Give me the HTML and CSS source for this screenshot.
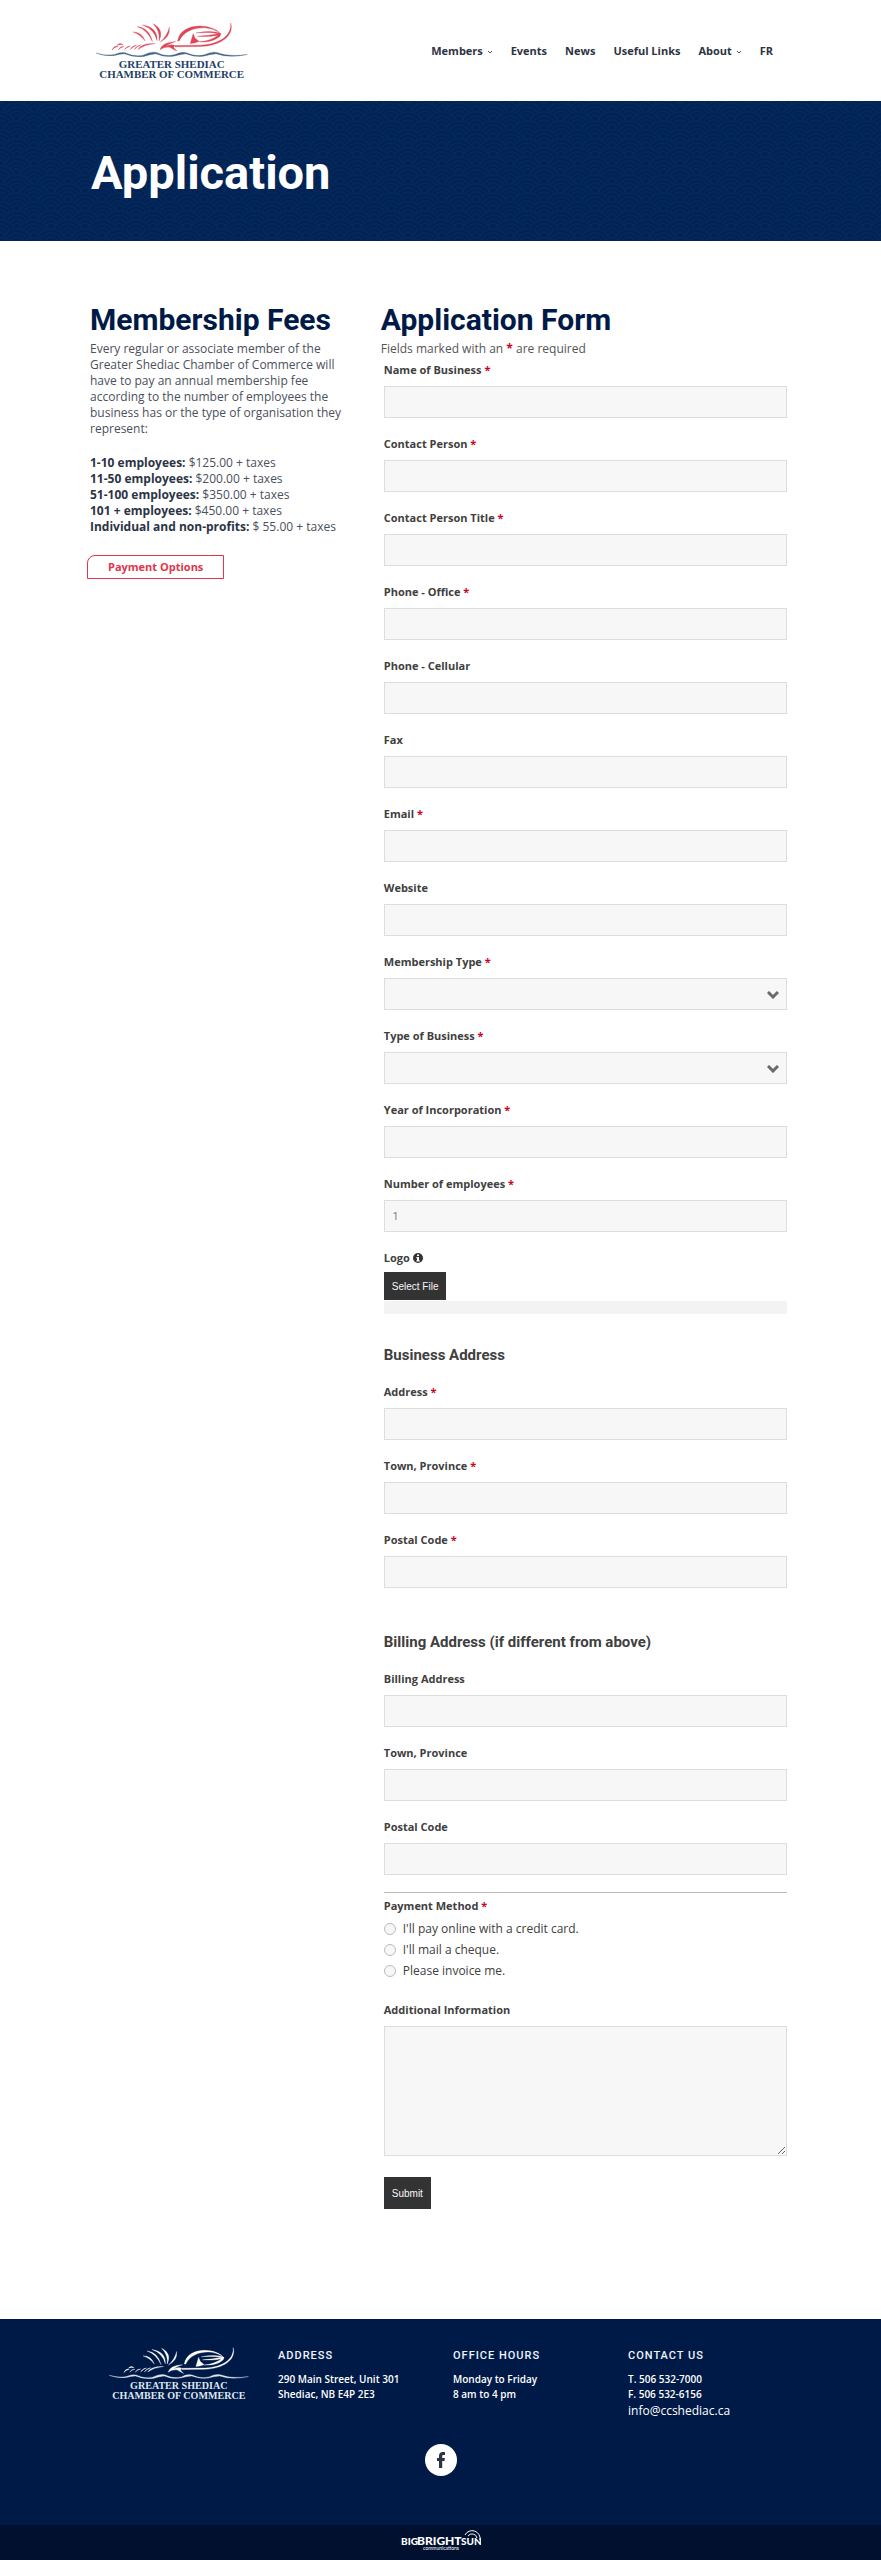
FILE: index.html
```html
<!DOCTYPE html>
<html lang="en">
<head>
    <meta charset="UTF-8">
    <meta name="viewport" content="width=device-width, initial-scale=1.0">
    <title>Application - Greater Shediac Chamber of Commerce</title>
    <link rel="stylesheet" href="styles.css">
</head>
<body>
    <header class="header">
        <a href="#" aria-label="Greater Shediac Chamber of Commerce">
            <svg class="logo" viewBox="70 50 480 190">
                <g id="lobster" class="logo-lobster">
                    <path d="M189 92 Q216 92 226 119 Q210 98 189 92Z"/>
                    <path d="M202 76 Q238 80 248 121 Q232 86 202 76Z"/>
                    <path d="M218 71 Q264 78 262 118 Q254 84 218 71Z"/>
                    <path d="M250 67 Q284 84 268 119 Q272 90 250 67Z"/>
                    <path d="M299 78 Q302 108 272 122 Q293 104 299 78Z"/>
                    <path d="M324 119 C334 60 430 66 453 98 C425 70 350 72 329 119Z"/>
                    <path d="M371 97 L376 110 L389 121 Q374 127 362 127Z"/>
                    <path d="M380 95 Q430 86 454 97 Q456 104 442 112 Q424 124 389 122 Q425 119 446 102 Q420 108 384 105 Q420 103 446 97 Q420 92 380 95Z"/>
                    <path d="M484 65 C496 106 450 134 392 136 L316 137 L316 133 L392 132 C448 130 488 104 484 65Z"/>
                    <path d="M271 146 Q276 124 318 121 Q296 128 287 136 Q302 128 315 132 L312 139 L322 150 L300 138 Q282 136 271 146Z"/>
                    <path d="M204 145 Q215 126 256 127 Q224 130 204 145Z"/>
                    <path d="M126 147 Q132 132 144 136 Q132 138 126 147Z"/>
                    <path d="M141 133 Q148 122 160 131 Q150 128 141 133Z"/>
                    <path d="M145 146 Q151 134 162 136 Q152 138 145 146Z"/>
                    <path d="M163 146 Q170 134 181 135 Q170 138 163 146Z"/>
                    <path d="M181 145 Q187 133 200 132 Q190 136 181 145Z"/>
                    <path d="M193 145 Q199 134 214 131 Q202 136 193 145Z"/>
                </g>
                <path id="wave" class="logo-wave" d="M78 156 Q108 165 134 160 Q152 152 166 155 Q192 168 220 162 Q244 150 260 154 Q288 168 314 161 Q335 150 350 155 Q380 168 405 161 Q428 150 442 154 Q480 168 534 160 Q480 172 440 158 Q420 160 402 165 Q375 169 348 158 Q330 160 312 165 Q286 170 258 158 Q240 160 222 166 Q190 170 164 158 Q150 158 134 163 Q104 167 78 156Z"/>
                <text class="logo-name" x="306" y="202">GREATER SHEDIAC</text>
                <text class="logo-name" x="306" y="232">CHAMBER OF COMMERCE</text>
            </svg>
        </a>
        <nav class="nav">
            <a href="#">Members <svg class="caret" viewBox="0 0 6 4"><path d="M1 1l2 2 2-2"/></svg></a>
            <a href="#">Events</a>
            <a href="#">News</a>
            <a href="#">Useful Links</a>
            <a href="#">About <svg class="caret" viewBox="0 0 6 4"><path d="M1 1l2 2 2-2"/></svg></a>
            <a href="#">FR</a>
        </nav>
    </header>

    <section class="hero">
        <svg class="hero-pattern" aria-hidden="true">
            <defs>
                <g id="scale">
                    <circle class="scale-fill" r="17"/>
                    <circle r="16"/>
                    <circle r="12"/>
                    <circle r="8"/>
                    <circle r="4"/>
                </g>
                <pattern id="waves" width="34" height="18" patternUnits="userSpaceOnUse">
                    <use href="#scale" x="17" y="0"/>
                    <use href="#scale" x="0" y="9"/>
                    <use href="#scale" x="34" y="9"/>
                    <use href="#scale" x="17" y="18"/>
                    <use href="#scale" x="0" y="27"/>
                    <use href="#scale" x="34" y="27"/>
                </pattern>
            </defs>
            <rect width="100%" height="100%" fill="url(#waves)"/>
        </svg>
        <h1>Application</h1>
    </section>

    <main class="main">
        <section class="fees">
            <h2>Membership Fees</h2>
            <p>Every regular or associate member of the Greater Shediac Chamber of Commerce will have to pay an annual membership fee according to the number of employees the business has or the type of organisation they represent:</p>
            <ul>
                <li><strong>1-10 employees:</strong> $125.00 + taxes</li>
                <li><strong>11-50 employees:</strong> $200.00 + taxes</li>
                <li><strong>51-100 employees:</strong> $350.00 + taxes</li>
                <li><strong>101 + employees:</strong> $450.00 + taxes</li>
                <li><strong>Individual and non-profits:</strong> $ 55.00 + taxes</li>
            </ul>
            <a class="payment-btn" href="#">Payment Options</a>
        </section>

        <section class="application">
            <h2>Application Form</h2>
            <p class="note">Fields marked with an <span class="req">*</span> are required</p>
            <form>
                <div class="field">
                    <label for="business">Name of Business <span class="req">*</span></label>
                    <input type="text" id="business">
                </div>
                <div class="field">
                    <label for="contact">Contact Person <span class="req">*</span></label>
                    <input type="text" id="contact">
                </div>
                <div class="field">
                    <label for="contactTitle">Contact Person Title <span class="req">*</span></label>
                    <input type="text" id="contactTitle">
                </div>
                <div class="field">
                    <label for="office">Phone - Office <span class="req">*</span></label>
                    <input type="tel" id="office">
                </div>
                <div class="field">
                    <label for="cell">Phone - Cellular</label>
                    <input type="tel" id="cell">
                </div>
                <div class="field">
                    <label for="fax">Fax</label>
                    <input type="tel" id="fax">
                </div>
                <div class="field">
                    <label for="email">Email <span class="req">*</span></label>
                    <input type="email" id="email">
                </div>
                <div class="field">
                    <label for="website">Website</label>
                    <input type="text" id="website">
                </div>
                <div class="field">
                    <label for="memberType">Membership Type <span class="req">*</span></label>
                    <div class="select">
                        <select id="memberType"><option></option></select>
                        <svg viewBox="0 0 12 8"><path d="M1 1l5 5 5-5"/></svg>
                    </div>
                </div>
                <div class="field">
                    <label for="businessType">Type of Business <span class="req">*</span></label>
                    <div class="select">
                        <select id="businessType"><option></option></select>
                        <svg viewBox="0 0 12 8"><path d="M1 1l5 5 5-5"/></svg>
                    </div>
                </div>
                <div class="field">
                    <label for="year">Year of Incorporation <span class="req">*</span></label>
                    <input type="text" id="year">
                </div>
                <div class="field">
                    <label for="employees">Number of employees <span class="req">*</span></label>
                    <input type="text" id="employees" value="1">
                </div>
                <div class="upload">
                    <label for="selectFile">Logo
                        <svg class="info" viewBox="0 0 10 10"><circle cx="5" cy="5" r="5"/><path d="M4 1.5h2v1.6H4zM3.4 4H6v3.2h.7v1.2H3.4V7.2H4V5.2h-.6z"/></svg>
                    </label>
                    <button type="button" id="selectFile">Select File</button>
                    <div class="progress"></div>
                </div>

                <h3>Business Address</h3>
                <div class="field">
                    <label for="address">Address <span class="req">*</span></label>
                    <input type="text" id="address">
                </div>
                <div class="field">
                    <label for="town">Town, Province <span class="req">*</span></label>
                    <input type="text" id="town">
                </div>
                <div class="field">
                    <label for="postal">Postal Code <span class="req">*</span></label>
                    <input type="text" id="postal">
                </div>

                <h3>Billing Address (if different from above)</h3>
                <div class="field">
                    <label for="billAddress">Billing Address</label>
                    <input type="text" id="billAddress">
                </div>
                <div class="field">
                    <label for="billTown">Town, Province</label>
                    <input type="text" id="billTown">
                </div>
                <div class="field">
                    <label for="billPostal">Postal Code</label>
                    <input type="text" id="billPostal">
                </div>

                <hr>

                <fieldset class="payment">
                    <legend>Payment Method <span class="req">*</span></legend>
                    <label><input type="radio" name="payment" value="card"> I'll pay online with a credit card.</label>
                    <label><input type="radio" name="payment" value="cheque"> I'll mail a cheque.</label>
                    <label><input type="radio" name="payment" value="invoice"> Please invoice me.</label>
                </fieldset>

                <div class="field">
                    <label for="info">Additional Information</label>
                    <textarea id="info"></textarea>
                </div>
                <button type="submit" class="submit">Submit</button>
            </form>
        </section>
    </main>

    <footer class="footer">
        <div class="footer-row">
            <svg class="logo logo-white" viewBox="70 50 480 190">
                <use href="#lobster"/>
                <use href="#wave"/>
                <text class="logo-name" x="306" y="202">GREATER SHEDIAC</text>
                <text class="logo-name" x="306" y="232">CHAMBER OF COMMERCE</text>
            </svg>
            <div>
                <h4>Address</h4>
                <p>290 Main Street, Unit 301<br>Shediac, NB E4P 2E3</p>
            </div>
            <div>
                <h4>Office Hours</h4>
                <p>Monday to Friday<br>8 am to 4 pm</p>
            </div>
            <div>
                <h4>Contact Us</h4>
                <p>T. 506 532-7000<br>F. 506 532-6156</p>
                <a href="#">info@ccshediac.ca</a>
            </div>
        </div>
        <a class="facebook" href="#" aria-label="Facebook">
            <svg viewBox="0 0 32 32"><path d="M14 24V17h-2v-3h2v-2c0-2.600 1.400-4 3.800-4h2.200v3h-1.500c-1 0-1.300.500-1.300 1.300V14h2.700l-.4 3h-2.300v7z"/></svg>
        </a>
    </footer>
    <div class="bottom-bar">
        <svg class="sun-logo" viewBox="0 0 80 24" role="img" aria-label="Big Bright Sun communications">
            <text class="sun-small" x="0" y="17">BIG</text>
            <text class="sun-big" x="16" y="17">BRIGHT</text>
            <text class="sun-small" x="60" y="17">SUN</text>
            <path d="M64 7a8 8 0 0 1 15 5M67 8a5 5 0 0 1 9 2"/>
            <text class="sun-sub" x="40" y="22">communications</text>
        </svg>
    </div>
</body>
</html>
```
FILE: styles.css
```css
* {
    box-sizing: border-box;
}

body {
    margin: 0;
    background-color: white;
    color: #4a505c;
    font-family: "Open Sans", sans-serif;
    font-size: 12px;
    line-height: 16px;
}

h1, h2, h3, h4 {
    margin: 0;
    font-family: Roboto, sans-serif;
}

a {
    color: inherit;
    text-decoration: none;
}

/* header */
.header {
    display: flex;
    justify-content: space-between;
    align-items: center;
    padding: 18px 108px 20px 93px;
}

.logo {
    display: block;
    width: 160px;
    height: 63px;
    --lobster: #dc4555;
    --wave: #3f6184;
    --name: #1f3f68;
}

.logo-lobster {
    fill: var(--lobster);
    stroke: var(--lobster);
    stroke-width: 1;
}

.logo-wave {
    fill: var(--wave);
    stroke: var(--wave);
    stroke-width: 1;
}

.logo-name {
    fill: var(--name);
    font-family: "Liberation Serif", serif;
    font-size: 33px;
    font-weight: bold;
    text-anchor: middle;
}

.nav {
    display: flex;
    gap: 18px;
    padding-top: 2px;
    color: #2c3444;
    font-size: 11px;
    font-weight: 700;
    white-space: nowrap;
}

.caret {
    width: 6px;
    height: 4px;
    margin-left: 1px;
    vertical-align: middle;
    fill: none;
    stroke: #555;
}

/* hero */
.hero {
    position: relative;
    padding: 44px 91px 40px;
    background-color: #002254;
}

.hero h1 {
    position: relative;
    color: white;
    font-size: 47px;
    line-height: 56px;
}

.hero-pattern {
    position: absolute;
    inset: 0;
    width: 100%;
    height: 100%;
}

.hero-pattern circle {
    fill: none;
    stroke: #042859;
    stroke-width: 2;
}

.hero-pattern .scale-fill {
    fill: #002254;
    stroke: none;
}

/* content */
.main {
    display: grid;
    grid-template-columns: minmax(0, 5fr) minmax(0, 8fr);
    gap: 35px;
    padding: 61px 91px 110px 90px;
}

.main h2 {
    color: #001a47;
    font-size: 30px;
    line-height: 36px;
    white-space: nowrap;
}

.fees p {
    margin: 3px 0 18px;
}

.fees ul {
    margin: 0 0 20px;
    padding: 0;
    list-style: none;
}

.fees strong {
    color: #2c3444;
}

.payment-btn {
    display: inline-block;
    margin-left: -3px;
    padding: 3px 20px;
    border: 1px solid #e0354b;
    border-radius: 8px 0 0 0;
    color: #e0354b;
    font-size: 11px;
    font-weight: 700;
}

.note {
    margin: 3px 0 4px;
    color: #555;
}

.req {
    color: #d0021b;
    font-weight: bold;
}

form {
    padding: 0 3px;
    color: #404040;
}

.field {
    margin-bottom: 17px;
}

.field > label,
.upload label,
.payment legend {
    display: block;
    padding: 0;
    font-size: 11px;
    font-weight: bold;
    line-height: 18px;
}

.field input,
.field select,
.field textarea {
    display: block;
    width: 100%;
    height: 32px;
    margin-top: 7px;
    padding: 0 8px;
    border: 1px solid #ddd;
    border-radius: 0;
    background-color: #f7f7f7;
    color: #777;
    font-family: Roboto, sans-serif;
    font-size: 10px;
    appearance: none;
}

.field textarea {
    height: 130px;
}

.select {
    position: relative;
}

.select svg {
    position: absolute;
    top: 13px;
    right: 8px;
    width: 12px;
    height: 8px;
    fill: none;
    stroke: #6a6a6a;
    stroke-width: 3;
    pointer-events: none;
}

.info {
    width: 10px;
    height: 10px;
    vertical-align: -1px;
}

.info circle {
    fill: #333;
}

.info path {
    fill: white;
}

form button {
    display: block;
    height: 28px;
    padding: 0 8px;
    border: 0;
    background-color: #333;
    color: #f7f7f7;
    font-family: "Liberation Sans", sans-serif;
    font-size: 10px;
    cursor: pointer;
}

.upload button {
    margin-top: 5px;
}

form .submit {
    height: 32px;
    margin-top: 21px;
}

.progress {
    height: 13px;
    margin-top: 1px;
    border-radius: 2px;
    background-color: #f3f3f3;
}

form h3 {
    margin: 30px 0 17px;
    font-size: 15px;
    line-height: 22px;
}

.field + h3 {
    margin-top: 43px;
}

hr {
    height: 1px;
    margin: 16px 0 4px;
    border: 0;
    background-color: #bbb;
}

.payment {
    margin: 0 0 20px;
    padding: 0;
    border: 0;
}

.payment legend {
    margin-bottom: 3px;
}

.payment label {
    display: flex;
    align-items: center;
    gap: 7px;
    line-height: 21px;
}

.payment input {
    width: 12px;
    height: 12px;
    margin: 0;
    border: 1px solid #bbb;
    border-radius: 50%;
    background-color: #f7f7f7;
    appearance: none;
}

/* footer */
.footer {
    padding: 24px 0 49px;
    background-color: #001a47;
    color: white;
}

.footer-row {
    display: grid;
    grid-template-columns: repeat(4, 1fr);
    padding: 0 78px 0 103px;
}

.logo-white {
    width: 148px;
    height: 58px;
    margin-left: 3px;
    --lobster: white;
    --wave: #dfe6f0;
    --name: #dfe6f0;
}

.footer h4 {
    margin: 5px 0 8px;
    color: #f0f3f8;
    font-size: 11px;
    font-weight: 500;
    letter-spacing: 1px;
    line-height: 16px;
    text-transform: uppercase;
}

.footer p {
    margin: 0;
    font-size: 10px;
    font-weight: 600;
    line-height: 15px;
}

.footer-row a {
    display: block;
    font-size: 12px;
    line-height: 18px;
}

.facebook {
    display: block;
    width: 32px;
    height: 32px;
    margin: 24px auto 0;
    border-radius: 50%;
    background-color: white;
}

.facebook svg {
    display: block;
    fill: #2c3444;
}

.bottom-bar {
    display: flex;
    justify-content: center;
    padding: 3px 0 8px;
    background-color: #00102e;
}

.sun-logo {
    width: 80px;
    height: 24px;
    fill: none;
    stroke: white;
}

.sun-logo text {
    fill: white;
    stroke: none;
    font-family: Lato, sans-serif;
    font-weight: 900;
}

.sun-logo .sun-small {
    font-size: 10px;
}

.sun-logo .sun-big {
    font-size: 12px;
}

.sun-logo .sun-sub {
    font-size: 5px;
    font-weight: 400;
    text-anchor: middle;
}
```
